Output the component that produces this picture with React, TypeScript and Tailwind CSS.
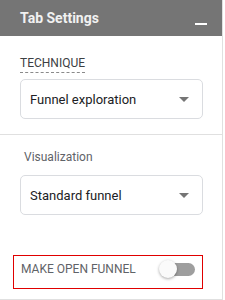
import React, { useState } from "react";

const Select = ({ value }: { value: string }) => (
  <div className="w-[183px] h-10 rounded-[5px] border border-[#dadce0] bg-white flex items-center justify-between pl-[9px] pr-[13px]">
    <span className="text-[13px] leading-5 text-[#202124] mt-[1px]">{value}</span>
    <svg width="10" height="5" viewBox="0 0 10 5">
      <path d="M0 0 L10 0 L5 5 Z" fill="#757575" />
    </svg>
  </div>
);

const App = () => {
  const [open, setOpen] = useState(false);

  return (
    <div
      className="w-[223px] h-[300px] bg-white border-r border-[#e0e0e0] flex flex-col"
      style={{ fontFamily: "Roboto, 'Liberation Sans', sans-serif" }}
    >
      {/* Header */}
      <div className="h-10 bg-[#757575] flex items-center justify-between pl-5 pr-[15px]">
        <span className="text-[14px] leading-5 font-bold text-[#f1f1f1]">Tab Settings</span>
        <span className="block w-3 h-[2px] bg-white mt-[12px]" />
      </div>

      {/* Technique */}
      <div className="px-5 pt-[14px] pb-[15px] border-b border-[#e0e0e0]">
        <span className="inline-block text-[12px] leading-4 text-[#3c4043] pb-px border-b border-dashed border-[#8a8a8a]">
          TECHNIQUE
        </span>
        <div className="mt-[5px]">
          <Select value="Funnel exploration" />
        </div>
      </div>

      {/* Visualization */}
      <div className="pt-[14px] pb-[10px] border-b border-[#e0e0e0]">
        <div className="px-5">
          <div className="pl-1 text-[12px] leading-4 text-[#5f6368]">Visualization</div>
          <div className="mt-[10px]">
            <Select value="Standard funnel" />
          </div>
        </div>

        <div className="ml-[13px] mt-10 w-[190px] border border-[#e00000] pl-[7px] pr-[7px] pt-[3px] pb-[9px]">
          <div className="h-5 flex items-center justify-between">
            <span className="text-[12px] leading-5 text-[#5f6368]">MAKE OPEN FUNNEL</span>
            <button
              type="button"
              onClick={() => setOpen(!open)}
              className="relative w-9 h-5 flex items-center"
            >
              <span className="absolute left-[1px] right-0 h-[13px] rounded-full bg-[#9e9e9e]" />
              <span
                className={
                  open
                    ? "absolute right-0 w-[18px] h-[18px] rounded-full bg-[#fafafa] shadow-[0_1px_3px_rgba(0,0,0,0.35)]"
                    : "absolute left-0 w-[18px] h-[18px] rounded-full bg-[#fafafa] shadow-[0_1px_3px_rgba(0,0,0,0.35)]"
                }
              />
            </button>
          </div>
        </div>
      </div>
    </div>
  );
};

export default App;
